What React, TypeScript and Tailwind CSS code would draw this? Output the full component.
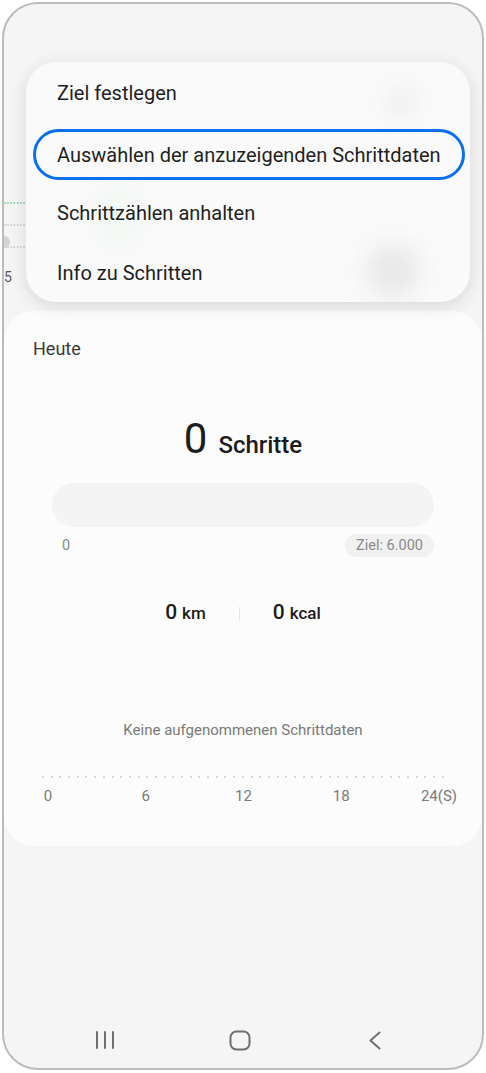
import React from 'react'

const menuItems = [
  'Ziel festlegen',
  'Auswählen der anzuzeigenden Schrittdaten',
  'Schrittzählen anhalten',
  'Info zu Schritten',
]

const hours = ['0', '6', '12', '18', '24(S)']

function Dots({ count, color }: { count: number; color: string }) {
  return (
    <div className="flex justify-between items-center">
      {Array.from({ length: count }).map((_, i) => (
        <span key={i} className={`w-[2px] h-[2px] rounded-full ${color}`} />
      ))}
    </div>
  )
}

function NavBar() {
  return (
    <div className="h-[56px] flex items-center pl-[81px] gap-[95px] text-[#6f6f6f]">
      <div className="w-[40px] flex justify-center">
        <svg width="20" height="18" viewBox="0 0 20 18" fill="none" stroke="currentColor" strokeWidth="2" strokeLinecap="round">
          <path d="M2 1v16M10 1v16M18 1v16" />
        </svg>
      </div>
      <div className="w-[40px] flex justify-center">
        <svg width="22" height="21" viewBox="0 0 22 21" fill="none" stroke="currentColor" strokeWidth="2">
          <rect x="1.5" y="1.5" width="19" height="18" rx="6" />
        </svg>
      </div>
      <div className="w-[40px] flex justify-center">
        <svg width="14" height="19" viewBox="0 0 14 19" fill="none" stroke="currentColor" strokeWidth="2" strokeLinecap="round" strokeLinejoin="round">
          <path d="M11.5 1.5L2.5 9.5l9 8" />
        </svg>
      </div>
    </div>
  )
}

export default function App() {
  return (
    <div className="w-[486px] h-[1073px] bg-white p-[2px] font-['Roboto',sans-serif]">
      <div className="relative h-[1068px] border-2 border-[#bcbcbc] rounded-[36px] bg-[#f5f5f5] overflow-hidden flex flex-col">
        {/* blurred screen behind the menu */}
        <div className="h-[307px] shrink-0 relative">
          <div className="flex flex-col gap-[20px] pt-[198px] w-[24px]">
            <Dots count={8} color="bg-[#8fd0a8]" />
            <Dots count={8} color="bg-[#cfcfcf]" />
            <Dots count={8} color="bg-[#cfcfcf]" />
          </div>
          <div className="absolute left-[-6px] top-[232px] w-[12px] h-[12px] rounded-full bg-[#d4d4d4]" />
          <div className="absolute left-[0px] top-[263px] text-[14px] text-[#555]">5</div>
        </div>

        {/* today card */}
        <section className="h-[535px] shrink-0 rounded-[30px] bg-[#fcfcfc] flex flex-col">
          <div className="pt-[26px] px-[29px] text-[18px] leading-[24px] text-[#3a3a3a]">Heute</div>

          <div className="mt-[57px] flex items-baseline justify-center gap-[11px] text-[#1c1c1c]">
            <span className="text-[42px] leading-none">0</span>
            <span className="text-[24px] leading-none font-medium">Schritte</span>
          </div>

          <div className="mx-[48px] mt-[23px] h-[44px] rounded-full bg-[#f4f4f4]" />
          <div className="mx-[48px] mt-[7px] flex items-center justify-between pl-[10px]">
            <span className="text-[14.5px] text-[#8a8a8a]">0</span>
            <span className="h-[23px] px-[11px] rounded-full bg-[#f1f1f1] text-[14.5px] leading-[23px] text-[#8a8a8a]">Ziel: 6.000</span>
          </div>

          <div className="mt-[42px] h-[28px] flex items-center justify-center text-[#1c1c1c]">
            <div className="flex items-baseline gap-[5px]">
              <span className="text-[21px] font-medium">0</span>
              <span className="text-[17px] font-medium">km</span>
            </div>
            <span className="mx-[33px] w-px h-[13px] bg-[#e6e6e6]" />
            <div className="flex items-baseline gap-[5px]">
              <span className="text-[21px] font-medium">0</span>
              <span className="text-[17px] font-medium">kcal</span>
            </div>
          </div>

          <div className="mt-[93px] text-center text-[15px] leading-[20px] text-[#7a7a7a]">Keine aufgenommenen Schrittdaten</div>

          <div className="mt-[36px] mx-[38px]">
            <Dots count={47} color="bg-[#cbcbcb]" />
          </div>

          <div className="mt-[8px] flex justify-between pl-[24px] pr-[23px] text-[15px] leading-[20px] text-[#7a7a7a]">
            {hours.map((h) => (
              <span key={h} className="w-[40px] text-center">{h}</span>
            ))}
          </div>
        </section>

        <div className="flex-1" />
        <NavBar />

        {/* overflow menu */}
        <div className="absolute left-[22px] top-[58px] w-[444px] h-[240px] pt-px rounded-[30px] bg-[#fafafa] shadow-[0_4px_18px_rgba(0,0,0,0.12)] overflow-hidden">
          <div className="absolute left-[340px] top-[182px] w-[54px] h-[54px] rounded-full bg-[#e8e8e8] blur-[12px]" />
          <div className="absolute left-[355px] top-[20px] w-[40px] h-[40px] rounded-full bg-[#f3f3f3] blur-[8px]" />
          <div className="absolute left-[70px] top-[120px] w-[44px] h-[70px] rounded-full bg-[#f3f8f4] blur-[12px]" />
          {menuItems.map((item, i) =>
            i === 1 ? (
              <div key={item} className="relative h-[60px] pt-[6px] pl-[7px] pr-[5px]">
                <div className="h-[51px] rounded-full border-[3px] border-[#0b6ff0] flex items-center pl-[21px] text-[20px] text-[#1f1f1f]">
                  {item}
                </div>
              </div>
            ) : (
              <div key={item} className="relative h-[60px] flex items-center pl-[31px] text-[20px] text-[#1f1f1f]">
                {item}
              </div>
            )
          )}
        </div>
      </div>
    </div>
  )
}
